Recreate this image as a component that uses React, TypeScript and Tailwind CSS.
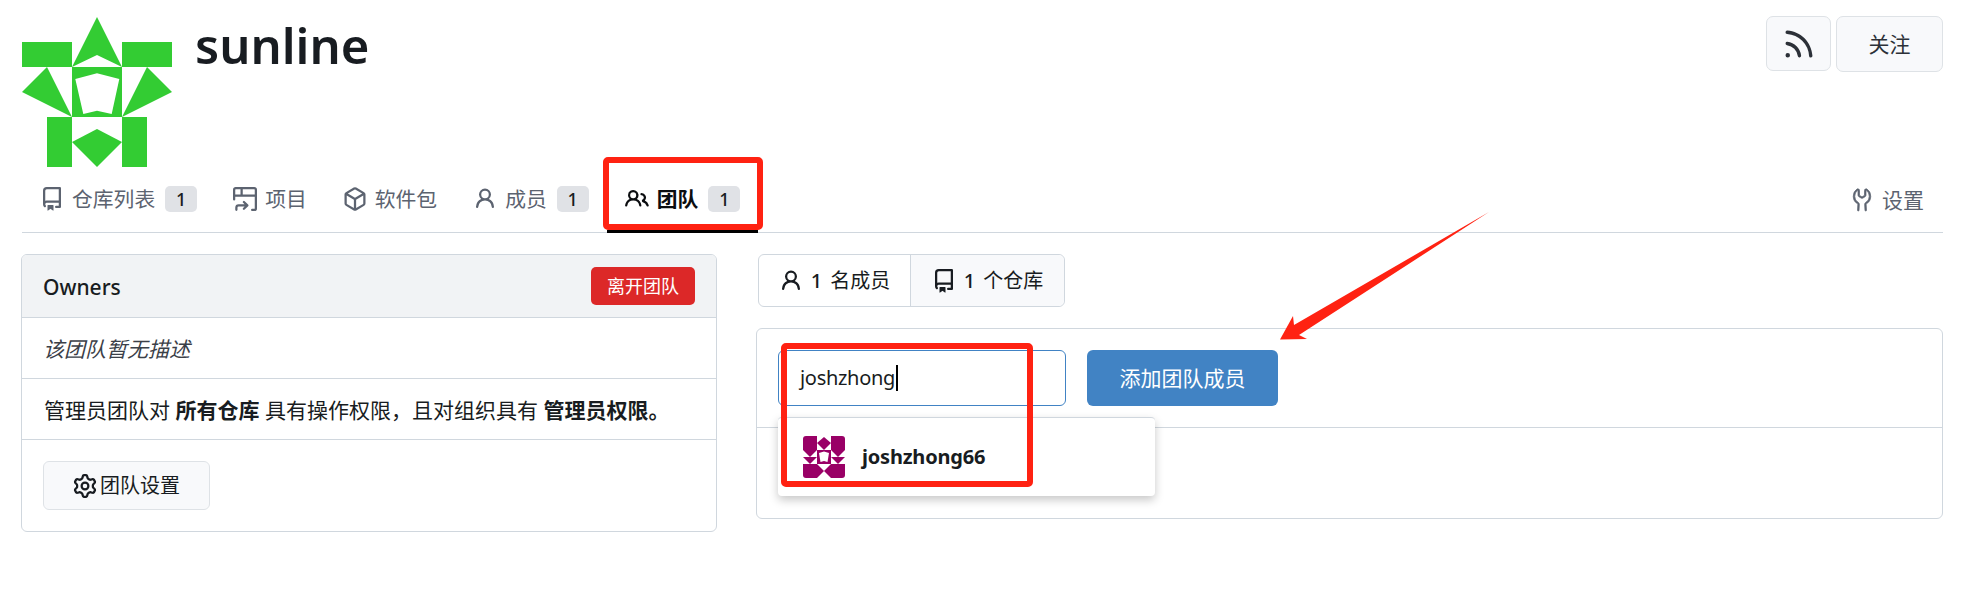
import { GoTools } from 'react-icons/go';

const font = { fontFamily: '"Noto Sans", "Noto Sans CJK SC", sans-serif' };

// octicons, 16px versions
const paths = {
  repo: 'M2 2.5A2.5 2.5 0 0 1 4.5 0h8.75a.75.75 0 0 1 .75.75v12.5a.75.75 0 0 1-.75.75h-2.5a.75.75 0 0 1 0-1.5h1.75v-2h-8a1 1 0 0 0-.714 1.7.75.75 0 1 1-1.072 1.05A2.495 2.495 0 0 1 2 11.5Zm10.5-1h-8a1 1 0 0 0-1 1v6.708A2.486 2.486 0 0 1 4.5 9h8ZM5 12.25a.25.25 0 0 1 .25-.25h3.5a.25.25 0 0 1 .25.25v3.25a.25.25 0 0 1-.4.2l-1.45-1.087a.249.249 0 0 0-.3 0L5.4 15.7a.25.25 0 0 1-.4-.2Z',
  project: 'M1.75 0h12.5C15.216 0 16 .784 16 1.75v12.5A1.75 1.75 0 0 1 14.25 16h-1.5a.75.75 0 0 1 0-1.5h1.5a.25.25 0 0 0 .25-.25V6.5h-13v1.75a.75.75 0 0 1-1.5 0V1.75C0 .784.784 0 1.75 0ZM6.5 5h8V1.75a.25.25 0 0 0-.25-.25H6.5Zm-5 0H5V1.5H1.75a.25.25 0 0 0-.25.25ZM1.5 13.737a2.25 2.25 0 0 1 2.262-2.238h3.975l-1.018-1.018a.75.75 0 0 1 1.06-1.06l2.3 2.3a.75.75 0 0 1 0 1.06l-2.3 2.3a.75.75 0 0 1-1.06-1.06l1.018-1.02H3.762a.75.75 0 0 0-.762.738v1.5a.75.75 0 0 1-1.5 0Z',
  package: 'm8.878.392 5.25 3.045c.54.314.872.89.872 1.514v6.098a1.75 1.75 0 0 1-.872 1.514l-5.25 3.045a1.75 1.75 0 0 1-1.756 0l-5.25-3.045A1.75 1.75 0 0 1 1 11.049V4.951c0-.624.332-1.201.872-1.514L7.122.392a1.75 1.75 0 0 1 1.756 0ZM7.875 1.69l-4.63 2.685L8 7.133l4.755-2.758-4.63-2.685a.248.248 0 0 0-.25 0ZM2.5 5.677v5.372c0 .09.047.171.125.216l4.625 2.683V8.432Zm6.25 8.271 4.625-2.683a.25.25 0 0 0 .125-.216V5.677L8.75 8.432Z',
  person: 'M10.561 8.073a6.005 6.005 0 0 1 3.432 5.142.75.75 0 1 1-1.498.07 4.5 4.5 0 0 0-8.99 0 .75.75 0 1 1-1.498-.07 6.004 6.004 0 0 1 3.431-5.142 3.999 3.999 0 1 1 5.123 0ZM10.5 5a2.5 2.5 0 1 0-5 0 2.5 2.5 0 0 0 5 0Z',
  people: 'M2 5.5a3.5 3.5 0 1 1 5.898 2.549 5.508 5.508 0 0 1 3.034 4.084.75.75 0 1 1-1.482.235 4 4 0 0 0-7.9 0 .75.75 0 0 1-1.482-.236A5.507 5.507 0 0 1 3.102 8.05 3.493 3.493 0 0 1 2 5.5ZM11 4a3.001 3.001 0 0 1 2.22 5.018 5.01 5.01 0 0 1 2.56 3.012.749.749 0 0 1-.885.954.752.752 0 0 1-.549-.514 3.507 3.507 0 0 0-2.522-2.372.75.75 0 0 1-.574-.73v-.352a.75.75 0 0 1 .416-.672A1.5 1.5 0 0 0 11 5.5.75.75 0 0 1 11 4Zm-5.5-.5a2 2 0 1 0-.001 3.999A2 2 0 0 0 5.5 3.5Z',
  rss: 'M2.002 2.725a.75.75 0 0 1 .797-.699C8.79 2.42 13.58 7.21 13.974 13.201a.75.75 0 0 1-1.497.098 10.502 10.502 0 0 0-9.776-9.776.747.747 0 0 1-.7-.798ZM2.84 7.05h-.002a7.002 7.002 0 0 1 6.113 6.111.75.75 0 0 1-1.49.178 5.503 5.503 0 0 0-4.8-4.8.75.75 0 0 1 .179-1.489ZM2 13a1 1 0 1 1 2 0 1 1 0 0 1-2 0Z',
  gear: 'M8 0a8.2 8.2 0 0 1 .701.031C9.444.095 9.99.645 10.16 1.29l.288 1.107c.018.066.079.158.212.224.231.114.454.243.668.386.123.082.233.09.299.071l1.103-.303c.644-.176 1.392.021 1.82.63.27.385.506.792.704 1.218.315.675.111 1.422-.364 1.891l-.814.806c-.049.048-.098.147-.088.294.016.257.016.515 0 .772-.01.147.038.246.088.294l.814.806c.475.469.679 1.216.364 1.891a7.977 7.977 0 0 1-.704 1.217c-.428.61-1.176.807-1.82.63l-1.102-.302c-.067-.019-.177-.011-.3.071a5.909 5.909 0 0 1-.668.386c-.133.066-.194.158-.211.224l-.29 1.106c-.168.646-.715 1.196-1.458 1.26a8.006 8.006 0 0 1-1.402 0c-.743-.064-1.289-.614-1.458-1.26l-.289-1.106c-.018-.066-.079-.158-.212-.224a5.738 5.738 0 0 1-.668-.386c-.123-.082-.233-.09-.299-.071l-1.103.303c-.644.176-1.392-.021-1.82-.63a8.12 8.12 0 0 1-.704-1.218c-.315-.675-.111-1.422.363-1.891l.815-.806c.05-.048.098-.147.088-.294a6.214 6.214 0 0 1 0-.772c.01-.147-.038-.246-.088-.294l-.815-.806C.635 6.045.431 5.298.746 4.623a7.92 7.92 0 0 1 .704-1.217c.428-.61 1.176-.807 1.82-.63l1.102.302c.067.019.177.011.3-.071.214-.143.437-.272.668-.386.133-.066.194-.158.211-.224l.29-1.106C6.009.645 6.556.095 7.299.03 7.53.01 7.764 0 8 0Zm-.571 1.525c-.036.003-.108.036-.137.146l-.289 1.105c-.147.561-.549.967-.998 1.189-.173.086-.34.183-.5.29-.417.278-.97.423-1.529.27l-1.103-.303c-.109-.03-.175.016-.195.045-.22.312-.412.644-.573.99-.014.031-.021.11.059.19l.815.806c.411.406.562.957.53 1.456a4.709 4.709 0 0 0 0 .582c.032.499-.119 1.05-.53 1.456l-.815.806c-.081.08-.073.159-.059.19.162.346.353.677.573.989.02.03.085.076.195.046l1.102-.303c.56-.153 1.113-.008 1.53.27.161.107.328.204.501.29.447.222.85.629.997 1.189l.289 1.105c.029.109.101.143.137.146a6.6 6.6 0 0 0 1.142 0c.036-.3.108-.036.137-.146l.289-1.105c.147-.561.549-.967.998-1.189.173-.086.34-.183.5-.29.417-.278.97-.423 1.529-.27l1.103.303c.109.029.175-.016.195-.045.22-.313.411-.644.573-.99.014-.031.021-.11-.059-.19l-.815-.806c-.411-.406-.562-.957-.53-1.456a4.709 4.709 0 0 0 0-.582c-.032-.499.119-1.05.53-1.456l.815-.806c.081-.08.073-.159.059-.19a6.464 6.464 0 0 0-.573-.989c-.02-.03-.085-.076-.195-.046l-1.102.303c-.56.153-1.113.008-1.53-.27a4.44 4.44 0 0 0-.501-.29c-.447-.222-.85-.629-.997-1.189l-.289-1.105c-.029-.11-.101-.143-.137-.146a6.6 6.6 0 0 0-1.142 0ZM11 8a3 3 0 1 1-6 0 3 3 0 0 1 6 0ZM9.5 8a1.5 1.5 0 1 0-3.001.001A1.5 1.5 0 0 0 9.5 8Z',
};

function Octicon({ name, size = 24 }: { name: keyof typeof paths; size?: number }) {
  return (
    <svg width={size} height={size} viewBox="0 0 16 16" fill="currentColor" className="shrink-0">
      <path fillRule="evenodd" d={paths[name]} />
    </svg>
  );
}

function Logo() {
  return (
    <svg width="150" height="150" viewBox="0 0 150 150" className="shrink-0" fill="#33cc33">
      <rect x="0" y="25" width="50" height="25" />
      <rect x="100" y="25" width="50" height="25" />
      <polygon points="75,0 100,50 75,38 50,50" />
      <path fillRule="evenodd" d="M50 50H100V100H50Z M53.3 62L75 56.3L97.3 62L89.7 97L75 93.7L61.3 97Z" />
      <polygon points="25,50 0,75 50,100" />
      <polygon points="125,50 150,75 100,100" />
      <rect x="25" y="100" width="25" height="50" />
      <rect x="100" y="100" width="25" height="50" />
      <polygon points="50,125 75,112 100,125 75,150" />
    </svg>
  );
}

function Avatar() {
  return (
    <svg width="42" height="42" viewBox="0 0 42 42" className="shrink-0 rounded-[3px] bg-white" fill="#990066">
      <polygon points="0,0 14,0 14,14 7,21 0,14" />
      <polygon points="28,0 42,0 42,14 35,21 28,14" />
      <polygon points="21,1 28,7 21,14 14,7" />
      <polygon points="0,21 14,21 7,28" />
      <polygon points="28,21 42,21 35,28" />
      <path fillRule="evenodd" d="M14 14H28V28H14Z M16 17L21 15.5L26 17L24.5 26L21 25L17.5 26Z" />
      <polygon points="0,28 14,28 21,35 14,42 0,42" />
      <polygon points="42,28 28,28 21,35 28,42 42,42" />
    </svg>
  );
}

function Tab({ icon, label, count, active }: { icon: keyof typeof paths; label: string; count?: number; active?: boolean }) {
  return (
    <div className={`flex h-[66px] items-center px-[18px] pt-px text-[20.8px] border-b-[3px] -mb-px ${active ? 'border-black text-[#0b0d10] font-bold' : 'border-transparent text-[#5c6370]'}`}>
      <span className="mr-2 flex w-6 justify-center"><Octicon name={icon} /></span>
      <span>{label}</span>
      {count !== undefined && (
        <span className="ml-[10px] flex h-[26px] w-8 items-center justify-center rounded-[5px] bg-[#e0e2e6] text-[18px] font-medium text-[#181c21]">{count}</span>
      )}
    </div>
  );
}

export default function App() {
  return (
    <div className="relative min-h-[609px] bg-white px-[22px] text-[21px] leading-none text-[#181c21]" style={font}>
      {/* Header */}
      <div className="flex items-start pt-[17px]">
        <Logo />
        <h1 className="ml-[23px] -mt-[4px] text-[49px] font-semibold leading-[64px]">sunline</h1>
        <div className="ml-auto flex gap-[5px]">
          <button className="flex h-[55px] w-[65px] -mt-px items-center justify-center rounded-[7px] border border-[#dee2e6] bg-[#f8f9fb] text-[#2c3138]">
            <Octicon name="rss" size={36} />
          </button>
          <button className="h-[56px] w-[107px] -mt-px rounded-[7px] border border-[#dee2e6] bg-[#f8f9fb] text-[21px] text-[#2c3138]">关注</button>
        </div>
      </div>

      {/* Tabs */}
      <div className="flex border-b border-[#d0d7de]">
        <Tab icon="repo" label="仓库列表" count={1} />
        <Tab icon="project" label="项目" />
        <Tab icon="package" label="软件包" />
        <Tab icon="person" label="成员" count={1} />
        <Tab icon="people" label="团队" count={1} active />
        <div className="ml-auto flex items-center pr-[19px] pt-px text-[#5c6370]">
          <GoTools size={24} className="mr-2" strokeWidth={0.7} stroke="currentColor" />
          <span>设置</span>
        </div>
      </div>

      {/* Content */}
      <div className="mt-[21px] grid grid-cols-[695px_1fr] gap-[39px]">
        <div className="-ml-px h-[278px] overflow-hidden rounded-[6px] border border-[#d0d7de]">
          <div className="flex h-[63px] items-center justify-between border-b border-[#d0d7de] bg-[#f1f3f5] px-[21px]">
            <span className="pt-[2px] font-medium">Owners</span>
            <span className="flex h-[38px] w-[104px] items-center justify-center rounded-[5px] bg-[#dc2828] text-[18px] text-white">离开团队</span>
          </div>
          <div className="flex h-[61px] items-center border-b border-[#d0d7de] px-[21px] pt-[2px] italic text-[#3b4048]">该团队暂无描述</div>
          <div className="flex h-[61px] items-center border-b border-[#d0d7de] px-[22px] pt-[2px]">
            <span>管理员团队对 <b>所有仓库</b> 具有操作权限，且对组织具有 <b>管理员权限。</b></span>
          </div>
          <div className="px-[21px] pt-[21px]">
            <button className="flex h-[49px] w-[167px] items-center justify-center gap-[3px] rounded-[6px] border border-[#dee2e6] bg-[#f8f9fb] text-[20px]">
              <Octicon name="gear" />
              <span className="pt-px">团队设置</span>
            </button>
          </div>
        </div>

        <div>
          <div className="ml-[2px] flex h-[53px] w-[307px] rounded-[6px] border border-[#d0d7de] text-[20px]">
            <div className="flex w-[152px] items-center justify-center gap-2 border-r border-[#d0d7de]">
              <Octicon name="person" />
              <span className="font-medium">1</span>
              <span className="pt-px">名成员</span>
            </div>
            <div className="flex flex-1 items-center justify-center gap-2 rounded-r-[6px] bg-[#f8f9fb]">
              <Octicon name="repo" />
              <span className="font-medium">1</span>
              <span className="pt-px">个仓库</span>
            </div>
          </div>

          <div className="relative mt-[21px] h-[191px] rounded-[6px] border border-[#d0d7de]">
            <div className="flex h-[99px] gap-[21px] border-b border-[#d0d7de] px-[21px] pt-[21px]">
              <div className="flex h-[56px] w-[288px] items-center rounded-[6px] border border-[#4183c4] px-[21px] text-[20px] tracking-[-0.3px]">
                joshzhong<span className="ml-px h-[26px] w-[2px] bg-black" />
              </div>
              <button className="h-[56px] w-[191px] rounded-[6px] bg-[#4183c4] text-[21px] text-white">添加团队成员</button>
            </div>
            {/* Search result */}
            <div className="absolute left-[21px] top-[88px] z-10 flex h-[79px] w-[377px] items-center gap-[17px] rounded-[4px] border-t border-[#d0d7de] bg-white pl-[25px] font-bold shadow-[0_4px_10px_rgba(0,0,0,0.22)]">
              <Avatar />
              <span className="text-[20px] tracking-[-0.2px]">joshzhong66</span>
            </div>
          </div>
        </div>
      </div>

      {/* Annotations */}
      <div className="absolute left-[603px] top-[157px] z-20 h-[73px] w-[160px] rounded-[5px] border-[6px] border-[#ff2212]" />
      <div className="absolute left-[781px] top-[343px] z-20 h-[144px] w-[252px] rounded-[5px] border-[6px] border-[#ff2212]" />
      <svg className="absolute left-[1270px] top-[205px] z-20" width="230" height="145" viewBox="1270 205 230 145">
        <polygon points="1489,212 1299,335 1307,339 1280,339.5 1293,316 1294,325" fill="#ff2212" />
      </svg>
    </div>
  );
}
